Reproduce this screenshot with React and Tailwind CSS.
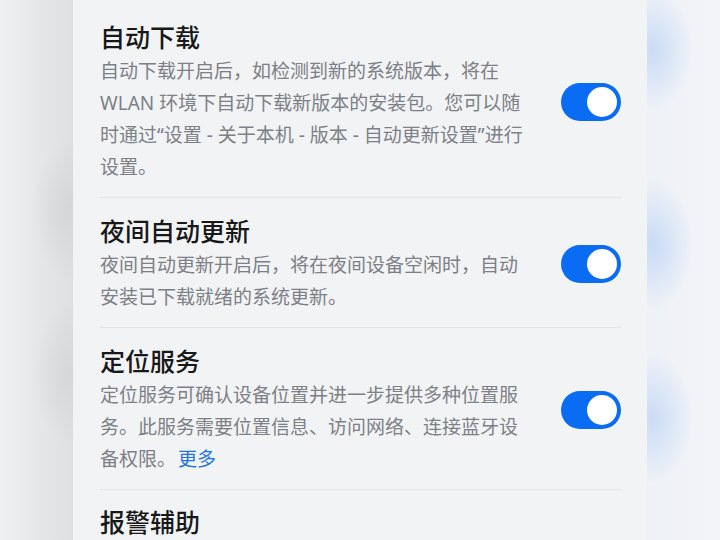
import React from 'react';

const settings = [
  {
    id: 'auto-download',
    title: '自动下载',
    desc: '自动下载开启后，如检测到新的系统版本，将在 WLAN 环境下自动下载新版本的安装包。您可以随时通过“设置 - 关于本机 - 版本 - 自动更新设置”进行设置。',
    on: true,
  },
  {
    id: 'night-update',
    title: '夜间自动更新',
    desc: '夜间自动更新开启后，将在夜间设备空闲时，自动安装已下载就绪的系统更新。',
    on: true,
  },
  {
    id: 'location',
    title: '定位服务',
    desc: '定位服务可确认设备位置并进一步提供多种位置服务。此服务需要位置信息、访问网络、连接蓝牙设备权限。',
    more: true,
    on: true,
  },
];

const Toggle = ({ on }) => (
  <div className={`w-[60px] h-[38px] rounded-full p-[4px] flex items-center shrink-0 ${on ? 'bg-[#0a6cf2] justify-end' : 'bg-[#d5d7db] justify-start'}`}>
    <div className="w-[30px] h-[30px] rounded-full bg-white" />
  </div>
);

const App = () => {
  return (
    <div className="w-[720px] h-[540px] overflow-hidden flex font-['Noto_Sans','Noto_Sans_CJK_SC',sans-serif]">
      {/* blurred background, left */}
      <div className="w-[73px] shrink-0 bg-[radial-gradient(ellipse_40px_70px_at_70px_210px,#d5d6d8,transparent),radial-gradient(ellipse_40px_70px_at_70px_375px,#d6d7d9,transparent),linear-gradient(to_right,#eef0f2,#e6e7e9_55%,#dedfe1)]" />

      {/* settings panel */}
      <div className="w-[574px] shrink-0 bg-[#f1f3f5] pl-[27px] pr-[26px] pt-[4px]">
        {settings.map((s) => (
          <div key={s.id} className="flex items-center border-b border-[#e1e3e6] pt-[16px] pb-[14px]">
            <div className="w-[430px]">
              <div className="text-[25px] leading-[34px] font-medium text-[#181818]">{s.title}</div>
              <p className="mt-[1px] text-[19px] leading-[32px] text-[#7d8085]">
                {s.desc}
                {s.more && <span className="text-[#1d74e0] ml-[2px] align-top">更多</span>}
              </p>
            </div>
            <div className="flex-1 flex justify-end">
              <Toggle on={s.on} />
            </div>
          </div>
        ))}
        <div className="pt-[15px]">
          <div className="text-[25px] leading-[34px] font-medium text-[#181818]">报警辅助</div>
        </div>
      </div>

      {/* blurred background, right */}
      <div className="flex-1 bg-[radial-gradient(ellipse_40px_60px_at_6px_50px,#cadcf6,transparent),radial-gradient(ellipse_40px_65px_at_6px_245px,#c8dbf7,transparent),radial-gradient(ellipse_40px_65px_at_6px_418px,#cbdcf6,transparent),linear-gradient(to_right,#eef1f6,#f3f4f7)]" />
    </div>
  );
};

export default App;
